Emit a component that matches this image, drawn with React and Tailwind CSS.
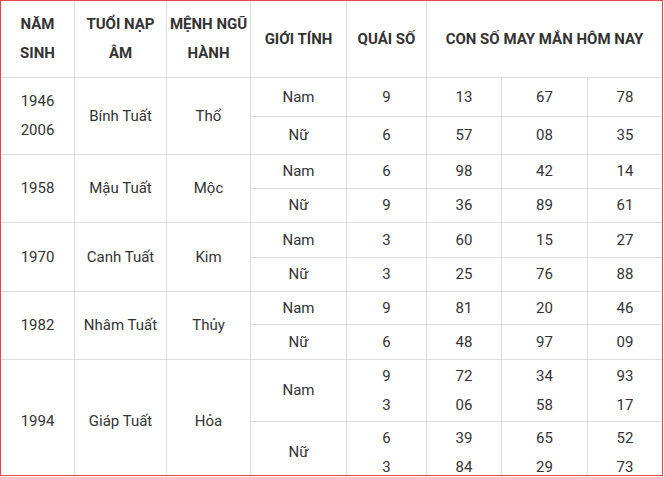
import React from "react";

const cell = "bg-white flex items-center justify-center text-center leading-[29px]";

function C({ children, className = "px-1" }) {
  return <div className={`${cell} ${className}`}>{children}</div>;
}

const groups = [
  { year: ["1946", "2006"], tuoi: "Bính Tuất", menh: "Thổ", rows: [
    { g: "Nam", q: ["9"], n: [["13"], ["67"], ["78"]] },
    { g: "Nữ", q: ["6"], n: [["57"], ["08"], ["35"]] },
  ]},
  { year: ["1958"], tuoi: "Mậu Tuất", menh: "Mộc", rows: [
    { g: "Nam", q: ["6"], n: [["98"], ["42"], ["14"]] },
    { g: "Nữ", q: ["9"], n: [["36"], ["89"], ["61"]] },
  ]},
  { year: ["1970"], tuoi: "Canh Tuất", menh: "Kim", rows: [
    { g: "Nam", q: ["3"], n: [["60"], ["15"], ["27"]] },
    { g: "Nữ", q: ["3"], n: [["25"], ["76"], ["88"]] },
  ]},
  { year: ["1982"], tuoi: "Nhâm Tuất", menh: "Thủy", rows: [
    { g: "Nam", q: ["9"], n: [["81"], ["20"], ["46"]] },
    { g: "Nữ", q: ["6"], n: [["48"], ["97"], ["09"]] },
  ]},
  { year: ["1994"], tuoi: "Giáp Tuất", menh: "Hỏa", rows: [
    { g: "Nam", q: ["9", "3"], n: [["72", "06"], ["34", "58"], ["93", "17"]] },
    { g: "Nữ", q: ["6", "3"], n: [["39", "84"], ["65", "29"], ["52", "73"]] },
  ]},
];

const Lines = ({ items }) => (
  <div className="flex flex-col">
    {items.map((t, i) => (
      <span key={i}>{t}</span>
    ))}
  </div>
);

export default function App() {
  return (
    <div className="w-[663px] h-[476px] border border-[#e2484b] overflow-hidden bg-white">
      <div
        className="bg-[#dddddd] text-[15px] text-[#333333]"
        style={{ fontFamily: "Roboto, 'Noto Sans', sans-serif" }}
      >
        <div className="grid grid-cols-[73px_91px_83px_95px_79px_74px_85px_74px] grid-rows-[76px_38px_37px_33px_33px_34px_33px_32px_34px_61px_61px] gap-px">
          <C className="px-1 font-bold row-start-1 col-start-1">NĂM SINH</C>
          <C className="px-1 font-bold row-start-1 col-start-2">TUỔI NẠP ÂM</C>
          <C className="px-0 font-bold row-start-1 col-start-3 whitespace-nowrap">
            <Lines items={["MỆNH NGŨ", "HÀNH"]} />
          </C>
          <C className="px-1 font-bold row-start-1 col-start-4">GIỚI TÍNH</C>
          <C className="px-1 font-bold row-start-1 col-start-5">QUÁI SỐ</C>
          <C className="px-1 font-bold row-start-1 col-start-6 col-span-3">CON SỐ MAY MẮN HÔM NAY</C>
          {groups.map((gr, gi) => (
            <React.Fragment key={gi}>
              <C className="px-1 row-span-2">
                <Lines items={gr.year} />
              </C>
              <C className="px-1 row-span-2">{gr.tuoi}</C>
              <C className="px-1 row-span-2">{gr.menh}</C>
              {gr.rows.map((r, ri) => (
                <React.Fragment key={ri}>
                  <C className={ri === 1 ? "px-1 col-start-4" : "px-1"}>{r.g}</C>
                  <C>
                    <Lines items={r.q} />
                  </C>
                  {r.n.map((n, ni) => (
                    <C key={ni}>
                      <Lines items={n} />
                    </C>
                  ))}
                </React.Fragment>
              ))}
            </React.Fragment>
          ))}
        </div>
      </div>
    </div>
  );
}
